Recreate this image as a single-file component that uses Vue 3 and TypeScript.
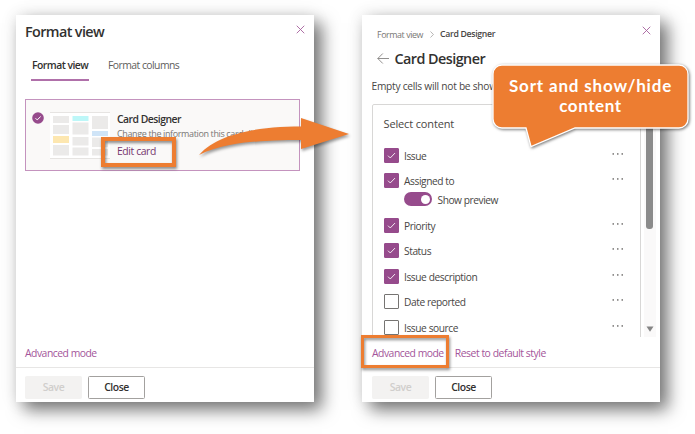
<script setup lang="ts">
interface Field {
  label: string
  checked: boolean
  preview?: boolean
}

const fields: Field[] = [
  { label: 'Issue', checked: true },
  { label: 'Assigned to', checked: true, preview: true },
  { label: 'Priority', checked: true },
  { label: 'Status', checked: true },
  { label: 'Issue description', checked: true },
  { label: 'Date reported', checked: false },
  { label: 'Issue source', checked: false },
]
</script>

<template>
  <main class="stage">
    <section class="panel">
      <header class="head">
        <h1 class="title">Format view</h1>
        <svg class="close" viewBox="0 0 10 10"><path d="M.8 .8 9.2 9.2M9.2 .8 .8 9.2" /></svg>
      </header>
      <nav class="tabs">
        <span class="tab active">Format view</span>
        <span class="tab">Format columns</span>
      </nav>
      <article class="option">
        <svg class="badge" viewBox="0 0 12 12">
          <circle cx="6" cy="6" r="5.8" fill="#964b8c" />
          <path d="M3.5 6.2 5.2 7.9 8.7 4.5" fill="none" stroke="#fff" stroke-width="1" />
        </svg>
        <svg class="thumb" viewBox="0 0 60 47">
          <rect width="60" height="47" fill="#fff" />
          <path d="M0 .5H60M0 46.5H60" stroke="#e6e4e2" />
          <g fill="#ebeae9">
            <rect x="3" y="4" width="16" height="7" />
            <rect x="3" y="13" width="16" height="9" />
            <rect x="3" y="33" width="16" height="10.500" />
            <rect x="22.500" y="10.500" width="16" height="12" />
            <rect x="22.500" y="25" width="16" height="8.500" />
            <rect x="22.500" y="35.500" width="16" height="8" />
            <rect x="42" y="4" width="16" height="13" />
            <rect x="42" y="25.500" width="16" height="9.500" />
            <rect x="42" y="37" width="16" height="6.500" />
          </g>
          <rect x="3" y="24" width="16" height="7" fill="#fde7b0" />
          <rect x="22.500" y="4" width="16" height="5" fill="#bdf7f8" />
          <rect x="42" y="19" width="16" height="5" fill="#cfe4f7" />
        </svg>
        <div class="about">
          <strong class="name">Card Designer</strong>
          <span class="desc">Change the information this card displays</span>
          <a class="edit">Edit card</a>
        </div>
      </article>
      <div class="links"><a class="link">Advanced mode</a></div>
      <footer class="foot">
        <button class="btn save">Save</button>
        <button class="btn">Close</button>
      </footer>
    </section>

    <section class="panel">
      <header class="head crumbs">
        <span class="crumb">Format view</span>
        <svg class="chev" viewBox="0 0 4 7"><path d="M.5 .5 3.400 3.500 .5 6.500" /></svg>
        <span class="crumb here">Card Designer</span>
        <svg class="close" viewBox="0 0 10 10"><path d="M.8 .8 9.200 9.200M9.200 .8 .8 9.200" /></svg>
      </header>
      <div class="heading">
        <svg class="back" viewBox="0 0 12 11"><path d="M12 5.500H.8M5.800 .5 .8 5.500 5.800 10.500" /></svg>
        <h1 class="title designer">Card Designer</h1>
      </div>
      <p class="note">Empty cells will not be shown</p>
      <div class="scroller">
        <div class="content">
          <h2 class="select">Select content</h2>
          <div v-for="f in fields" :key="f.label" class="field" :class="{ tall: f.preview }">
            <div class="row">
              <span class="box" :class="{ on: f.checked }">
                <svg v-if="f.checked" class="tick" viewBox="0 0 10 8"><path d="M1 4.200 3.600 6.800 9 1.200" /></svg>
              </span>
              <span class="label">{{ f.label }}</span>
              <svg class="dots" viewBox="0 0 12 2">
                <rect x=".5" y=".3" width="1.500" height="1.300" /><rect x="5" y=".3" width="1.500" height="1.300" /><rect x="9.500" y=".3" width="1.500" height="1.300" />
              </svg>
            </div>
            <div v-if="f.preview" class="preview">
              <span class="switch"><i class="knob"></i></span>
              <span class="label">Show preview</span>
            </div>
          </div>
        </div>
        <div class="bar">
          <span class="grip"></span>
          <svg class="down" viewBox="0 0 8 6"><path d="M.5 .5H7.500L4 5.800Z" /></svg>
        </div>
      </div>
      <div class="links low"><a class="link">Advanced mode</a><a class="link reset">Reset to default style</a></div>
      <footer class="foot">
        <button class="btn save">Save</button>
        <button class="btn">Close</button>
      </footer>
    </section>

    <div class="mark mark-edit"></div>
    <div class="mark mark-mode"></div>
    <svg class="arrow" viewBox="0 0 170 60">
      <path d="M9 45C28 23 70 16.500 111 16.500V8L159 24 111 39V30C78 30 38 31 9 45Z" fill="#ed7d31" />
    </svg>
    <div class="callout">
      <svg class="bubble" viewBox="0 0 206 96">
        <path d="M13 5H190A9 9 0 0 1 199 14V59A9 9 0 0 1 190 68H86L42 86.500 37 68H13A9 9 0 0 1 4 59V14A9 9 0 0 1 13 5Z" />
      </svg>
      <p class="say">Sort and show/hide<br /><span class="second">content</span></p>
    </div>
  </main>
</template>

<style>
body {
  background: #fff;
  overflow: hidden;
}
</style>

<style scoped>
* {
  box-sizing: border-box;
}
.stage {
  position: relative;
  display: flex;
  gap: 48px;
  width: 695px;
  height: 434px;
  padding: 15px 0 0 16px;
  overflow: hidden;
  font-family: 'Open Sans', 'Noto Sans', sans-serif;
  color: #323130;
}
.panel {
  display: flex;
  flex-direction: column;
  flex: none;
  width: 298px;
  height: 387px;
  background: #fff;
  box-shadow: 8px 8px 16px rgba(0, 0, 0, 0.52), 0 0 16px rgba(0, 0, 0, 0.1);
}
.head {
  display: flex;
  flex: none;
  align-items: center;
  height: 34px;
  padding: 0 8px 0 9px;
}
.title {
  margin: 0;
  font-size: 14.4px;
  font-weight: 600;
  line-height: 20px;
  letter-spacing: -0.62px;
  white-space: nowrap;
}
.close {
  flex: none;
  width: 9px;
  height: 9px;
  margin: -5px 1px 0 auto;
  fill: none;
  stroke: #a5609c;
  stroke-width: 1;
}
.tabs {
  display: flex;
  flex: none;
  gap: 17.500px;
  height: 32px;
  padding-left: 14.500px;
}
.tab {
  padding: 8px 1.500px 0;
  font-size: 10.4px;
  line-height: 16px;
  letter-spacing: -0.5px;
  color: #605e5c;
  white-space: nowrap;
}
.tab:last-child {
  letter-spacing: -0.54px;
}
.tab.active {
  width: 58.500px;
  border-bottom: 2px solid #b070aa;
  font-weight: 600;
  letter-spacing: -0.53px;
  color: #323130;
}
.option {
  display: flex;
  flex: none;
  width: 275.500px;
  height: 72px;
  margin: 18px 0 0 8.500px;
  padding: 11.500px 0 0 6px;
  border: 1px solid #c493be;
  background: #faf9f8;
}
.badge {
  flex: none;
  width: 12px;
  height: 12px;
}
.thumb {
  flex: none;
  width: 60px;
  height: 47px;
  margin-left: 6px;
}
.about {
  display: flex;
  flex-direction: column;
  padding-left: 7.500px;
  white-space: nowrap;
}
.name {
  font-size: 10.4px;
  font-weight: 600;
  line-height: 15px;
  letter-spacing: -0.52px;
}
.desc {
  font-size: 9px;
  line-height: 14px;
  letter-spacing: -0.37px;
  color: #797775;
}
.edit {
  margin-top: 2px;
  font-size: 10.4px;
  line-height: 16px;
  letter-spacing: -0.4px;
  color: #76356e;
}
.links {
  display: flex;
  flex: none;
  gap: 11px;
  margin-top: auto;
  padding: 0 0 5.500px 9px;
}
.link {
  font-size: 10.4px;
  line-height: 18px;
  letter-spacing: -0.5px;
  color: #a4559a;
  white-space: nowrap;
}
.reset {
  letter-spacing: -0.46px;
}
.foot {
  display: flex;
  flex: none;
  gap: 6px;
  height: 35px;
  padding: 8px 0 0 9px;
  border-top: 1.500px solid #e7e6e5;
}
.panel + .panel .links,
.panel + .panel .foot {
  padding-left: 10px;
}
.btn {
  width: 57px;
  height: 22.500px;
  padding: 0;
  border: 1px solid #a3a19f;
  border-radius: 1.500px;
  background: #fff;
  font-family: inherit;
  font-size: 10.4px;
  font-weight: 600;
  line-height: 20px;
  letter-spacing: -0.45px;
  color: #323130;
}
.save {
  border-color: #f3f2f1;
  background: #f3f2f1;
  color: #d0cecc;
}
.crumbs {
  height: 33px;
  padding: 5px 9px 0 15px;
  white-space: nowrap;
}
.crumbs .close {
  margin: -8px 0 0 auto;
}
.crumb {
  width: 46px;
  font-size: 8.9px;
  letter-spacing: -0.42px;
  color: #797775;
}
.crumb.here {
  width: 56px;
  font-weight: 600;
  font-size: 8.7px;
  letter-spacing: -0.3px;
  color: #484644;
}
.chev {
  width: 4px;
  height: 7px;
  margin: 0 6px 0 7px;
  fill: none;
  stroke: #979593;
  stroke-width: 0.7;
}
.heading {
  display: flex;
  flex: none;
  align-items: center;
  height: 22px;
  padding-left: 15px;
}
.back {
  width: 12px;
  height: 11px;
  margin: -2px 5.500px 0 0;
  fill: none;
  stroke: #767472;
  stroke-width: 0.8;
}
.designer {
  letter-spacing: -0.56px;
}
.note {
  margin: 8px 0 0 9.500px;
  font-size: 10.2px;
  line-height: 16px;
  letter-spacing: -0.26px;
  color: #484644;
  white-space: nowrap;
}
.scroller {
  display: flex;
  flex: none;
  gap: 2.500px;
  height: 233px;
  margin: 10px 0 0 10px;
  overflow: hidden;
}
.content {
  width: 269px;
  height: 260px;
  padding: 10px 16px 0 10.500px;
  border: 1px solid #d8d7d6;
  border-radius: 2px;
}
.select {
  margin: 0 0 14.500px;
  font-size: 11px;
  font-weight: 400;
  line-height: 18px;
  letter-spacing: -0.14px;
  color: #484644;
}
.field {
  height: 25.600px;
}
.field.tall {
  height: 44.600px;
}
.row {
  display: flex;
  align-items: center;
  height: 15px;
}
.box {
  display: flex;
  align-items: center;
  justify-content: center;
  width: 15px;
  height: 15px;
  border: 1px solid #767472;
  border-radius: 1px;
  background: #fff;
}
.box.on {
  border-color: #964b8c;
  background: #964b8c;
}
.tick {
  width: 9px;
  height: 7px;
  fill: none;
  stroke: #fff;
  stroke-width: 1;
}
.label {
  padding: 1px 0 0 5.500px;
  font-size: 10.2px;
  line-height: 14px;
  letter-spacing: -0.42px;
  color: #484644;
  white-space: nowrap;
}
.preview .label {
  letter-spacing: -0.45px;
}
.dots {
  width: 12px;
  height: 2px;
  margin: -3px 0 0 auto;
  fill: #605e5c;
}
.preview {
  display: flex;
  align-items: center;
  height: 14px;
  margin: 4px 0 0 20px;
}
.switch {
  display: flex;
  align-items: center;
  justify-content: flex-end;
  width: 28.500px;
  height: 14px;
  padding-right: 2.500px;
  border-radius: 7px;
  background: #964b8c;
}
.knob {
  width: 9px;
  height: 9px;
  border-radius: 50%;
  background: #fff;
}
.bar {
  display: flex;
  flex-direction: column;
  align-items: center;
  justify-content: space-between;
  width: 12px;
  padding-bottom: 5px;
  background: #faf9f9;
}
.grip {
  width: 6.500px;
  height: 125px;
  border-radius: 3px;
  background: #8b8b8b;
}
.down {
  width: 8px;
  height: 6px;
  fill: #858585;
}
.mark {
  position: absolute;
  border: 4px solid #ed7d31;
  filter: drop-shadow(1.500px 2px 1.500px rgba(0, 0, 0, 0.45));
}
.mark-edit {
  left: 101px;
  top: 137px;
  width: 75px;
  height: 30px;
}
.mark-mode {
  left: 361px;
  top: 335px;
  width: 88px;
  height: 33px;
  border-width: 3.500px;
}
.arrow {
  position: absolute;
  left: 190px;
  top: 110px;
  width: 170px;
  height: 60px;
  filter: drop-shadow(1px 2px 1.500px rgba(0, 0, 0, 0.4));
}
.callout {
  position: absolute;
  left: 489px;
  top: 60px;
  width: 206px;
  height: 96px;
}
.bubble {
  position: absolute;
  width: 206px;
  height: 96px;
  fill: #ed7d31;
  stroke: #fff;
  stroke-width: 1.3;
  filter: drop-shadow(1px 1.500px 1.500px rgba(0, 0, 0, 0.55));
}
.say {
  position: relative;
  left: -1.500px;
  margin: 0;
  padding-top: 16px;
  font-family: Lato, sans-serif;
  font-size: 17px;
  font-weight: 700;
  line-height: 19.500px;
  letter-spacing: 0.83px;
  text-align: center;
  color: #fff;
  white-space: nowrap;
}
.second {
  letter-spacing: 0.6px;
}
</style>
